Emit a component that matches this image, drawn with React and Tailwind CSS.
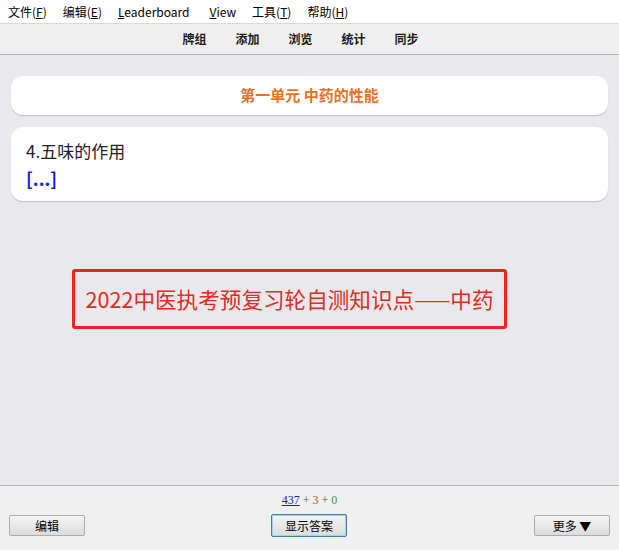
import React from 'react';

const cjk = { fontFamily: '"Microsoft YaHei", "Noto Sans CJK SC", "Noto Sans", sans-serif' };

function MenuItem({ label, mn, rest, className = '' }) {
    // label 前缀 + 下划线助记字母 + 后缀
    return (
        <span className={`px-2 whitespace-nowrap ${className}`}>
            {label}
            <span className="underline">{mn}</span>
            {rest}
        </span>
    );
}

function Btn({ children, focused, className = '' }) {
    return (
        <button
            className={`h-[21px] w-[76px] text-[12px] text-black rounded-[2px] border bg-gradient-to-b from-[#f4f4f4] to-[#dcdcdc] ${focused ? 'border-[#3c7fb1] shadow-[inset_0_0_0_1px_#a6d0ec]' : 'border-[#acacac]'} ${className}`}
            style={cjk}
        >
            {children}
        </button>
    );
}

export default function App() {
    return (
        <div className="w-[619px] h-[550px] flex flex-col bg-[#e9e9ed] overflow-hidden" style={cjk}>
            {/* 菜单栏 */}
            <div className="h-[24px] bg-white border-b border-[#d9d9d9] flex items-center text-[12px] text-black">
                <MenuItem label="文件(" mn="F" rest=")" />
                <MenuItem label="编辑(" mn="E" rest=")" />
                <MenuItem label="" mn="L" rest="eaderboard" className="mr-[4px]" />
                <MenuItem label="" mn="V" rest="iew" />
                <MenuItem label="工具(" mn="T" rest=")" />
                <MenuItem label="帮助(" mn="H" rest=")" />
            </div>

            {/* 工具栏 */}
            <div className="h-[31px] bg-[#f0f0f0] border-b border-[#b4b4b4] flex items-center justify-center pr-[18px] gap-[29px] text-[12px] font-bold text-[#1a1a1a]">
                <span>牌组</span>
                <span>添加</span>
                <span>浏览</span>
                <span>统计</span>
                <span>同步</span>
            </div>

            {/* 主区域 */}
            <div className="flex-1 flex flex-col px-[11px] pt-[21px]">
                <div className="h-[39px] bg-white rounded-[12px] shadow-[0_1px_1px_rgba(0,0,0,0.18)] flex items-center justify-center text-[15px] font-bold text-[#f0701e]">
                    第一单元 中药的性能
                </div>
                <div className="mt-[12px] h-[74px] bg-white rounded-[12px] shadow-[0_1px_1px_rgba(0,0,0,0.18)] px-[15px] pt-[12px]">
                    <div className="text-[17px] leading-[24px] text-[#222]">4.五味的作用</div>
                    <div className="text-[18px] leading-[30px] font-bold text-[#1a1ae6]">[...]</div>
                </div>

                <div className="mt-[68px] ml-[61px] w-[435px] h-[60px] border-[3px] border-[#e8261e] rounded-[3px] flex items-center justify-center text-[21.6px] text-[#e62a20]">
                    2022中医执考预复习轮自测知识点——中药
                </div>
            </div>

            {/* 底栏 */}
            <div className="h-[65px] bg-[#f0f0f0] border-t border-[#b4b4b4] flex flex-col items-center">
                <div className="mt-[7px] text-[12px] leading-[14px]" style={{ fontFamily: '"Liberation Serif", serif' }}>
                    <span className="text-[#2020a0] underline">437</span>
                    <span className="text-[#555]"> + </span>
                    <span className="text-[#c35617]">3</span>
                    <span className="text-[#555]"> + </span>
                    <span className="text-[#3a9a3a]">0</span>
                </div>
                <div className="w-full flex items-center justify-between px-[9px] mt-[7px]">
                    <Btn>编辑</Btn>
                    <Btn focused className="h-[23px] ml-[-1px]">显示答案</Btn>
                    <Btn>更多 ▼</Btn>
                </div>
            </div>
        </div>
    );
}
